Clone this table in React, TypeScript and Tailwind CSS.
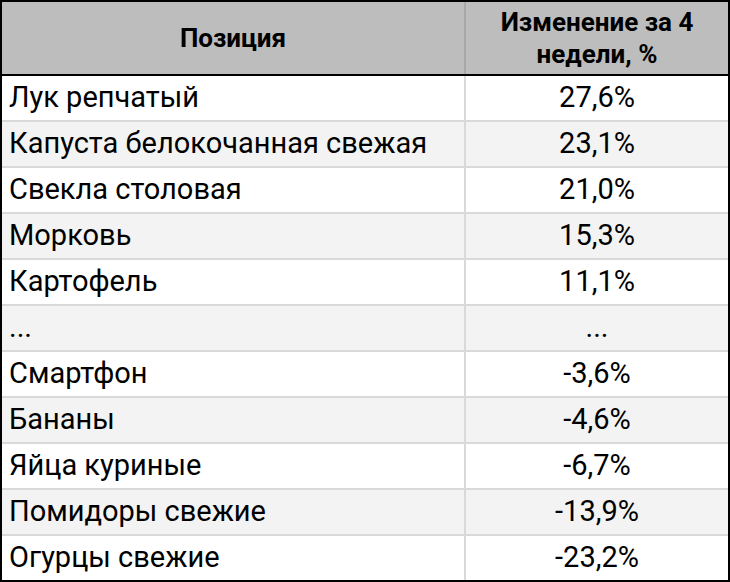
const rows: [string, string][] = [
  ["Лук репчатый", "27,6%"],
  ["Капуста белокочанная свежая", "23,1%"],
  ["Свекла столовая", "21,0%"],
  ["Морковь", "15,3%"],
  ["Картофель", "11,1%"],
  ["...", "..."],
  ["Смартфон", "-3,6%"],
  ["Бананы", "-4,6%"],
  ["Яйца куриные", "-6,7%"],
  ["Помидоры свежие", "-13,9%"],
  ["Огурцы свежие", "-23,2%"],
];

export default function App() {
  return (
    <div className="w-[730px] h-[582px] bg-white font-['Roboto',sans-serif] text-black">
      <div className="w-[730px] border-2 border-black">
        {/* header */}
        <div className="flex h-[74px] bg-[#bdbdbd] border-b-2 border-black font-bold text-[26px] leading-[32px]">
          <div className="w-[464px] shrink-0 border-r-2 border-[#a8a8a8] flex items-center justify-center">
            Позиция
          </div>
          <div className="flex-1 flex items-center justify-center text-center px-4">
            Изменение за 4 недели, %
          </div>
        </div>

        {/* body */}
        {rows.map(([name, value], i) => (
          <div
            key={i}
            className={`flex h-[46px] border-b-2 border-[#d9d9d9] last:border-b-0 last:h-[44px] text-[29px] ${
              i % 2 === 1 ? "bg-[#f3f3f3]" : "bg-white"
            }`}
          >
            <div className="w-[464px] shrink-0 border-r-2 border-[#d9d9d9] flex items-center pl-[7px]">
              {name}
            </div>
            <div className="flex-1 flex items-center justify-center">{value}</div>
          </div>
        ))}
      </div>
    </div>
  );
}
